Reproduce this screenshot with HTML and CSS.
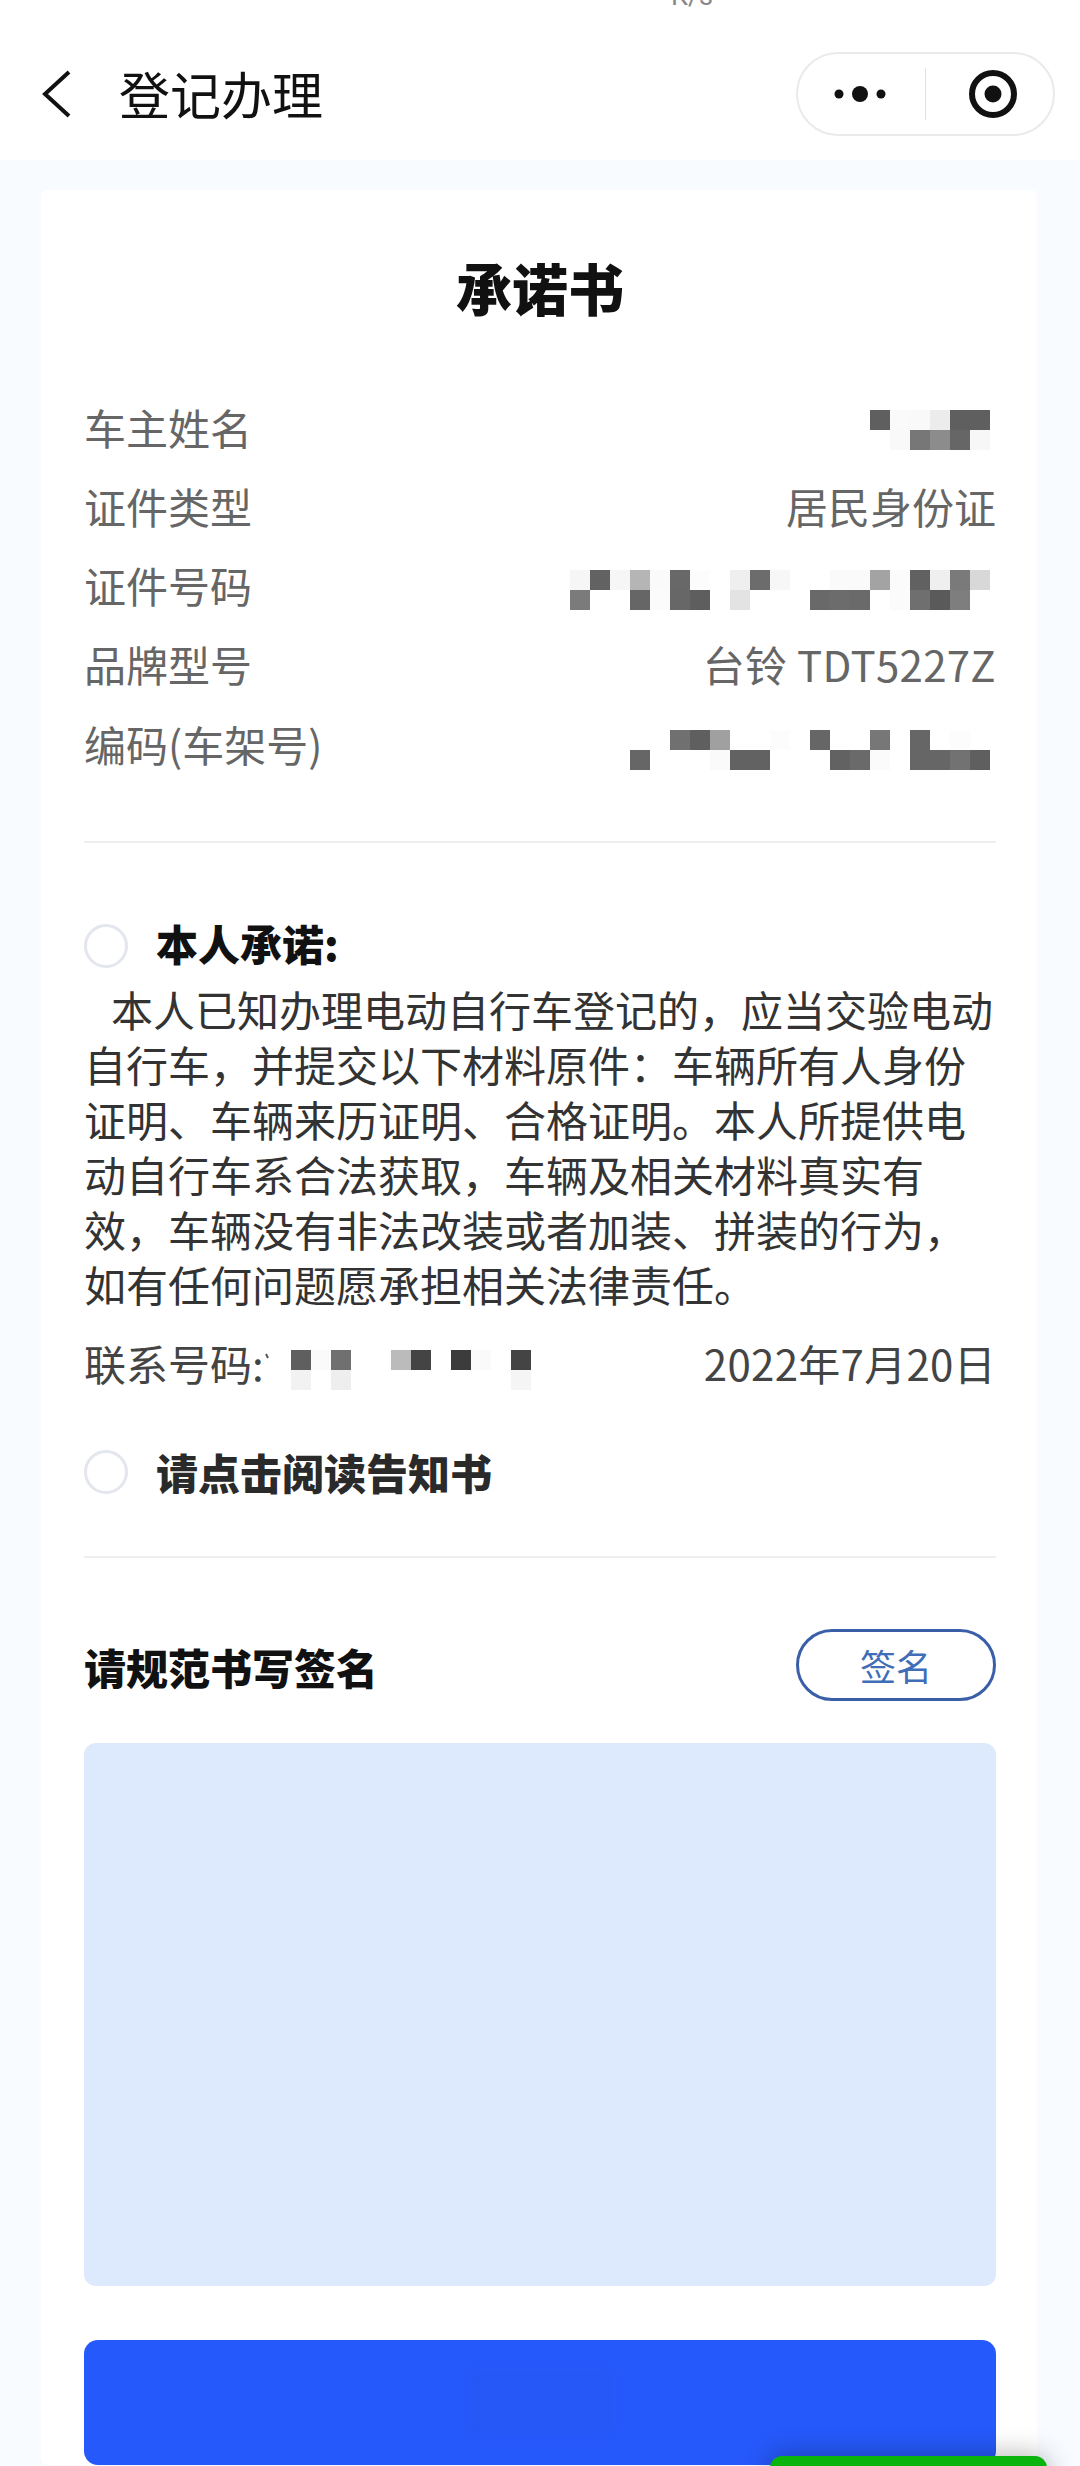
FILE: index.html
```html
<!DOCTYPE html>
<html lang="zh-CN">
<head>
<meta charset="utf-8">
<title>登记办理</title>
<link rel="stylesheet" href="styles.css">
</head>
<body>
<div class="status-speed">K/s</div>
<header class="nav">
  <div class="nav-left">
    <svg class="back" viewBox="0 0 30 50" width="30" height="50" aria-hidden="true"><path d="M28 3 L4 25 L28 47" fill="none" stroke="#111" stroke-width="4"/></svg>
    <span class="nav-title">登记办理</span>
  </div>
  <div class="capsule">
    <svg class="cap-more" viewBox="0 0 58 18" width="58" height="18" aria-hidden="true"><circle cx="8" cy="9" r="4.5" fill="#111"/><circle cx="29" cy="9" r="8" fill="#111"/><circle cx="50" cy="9" r="4.5" fill="#111"/></svg>
    <span class="cap-line"></span>
    <svg class="cap-rec" viewBox="0 0 50 50" width="50" height="50" aria-hidden="true"><circle cx="25" cy="25" r="21" fill="none" stroke="#111" stroke-width="6"/><circle cx="25" cy="25" r="8.5" fill="#111"/></svg>
  </div>
</header>
<main class="card">
  <h1 class="doc-title">承诺书</h1>
  <section class="info">
    <div class="row">
      <span>车主姓名</span>
      <svg class="mosaic mosaic-name" width="120" height="40" viewBox="0 0 120 40" aria-hidden="true">
        <rect x="0" width="20" height="20" fill="#5f5f5f"/><rect x="20" width="20" height="20" fill="#fafafa"/><rect x="40" width="20" height="20" fill="#f9f9f9"/><rect x="60" width="20" height="20" fill="#ececec"/><rect x="80" width="20" height="20" fill="#5f5f5f"/><rect x="100" width="20" height="20" fill="#5f5f5f"/>
        <rect x="20" y="20" width="20" height="20" fill="#f9f9f9"/><rect x="40" y="20" width="20" height="20" fill="#777"/><rect x="60" y="20" width="20" height="20" fill="#8c8c8c"/><rect x="80" y="20" width="20" height="20" fill="#666"/><rect x="100" y="20" width="20" height="20" fill="#f7f7f7"/>
      </svg>
    </div>
    <div class="row"><span>证件类型</span><span>居民身份证</span></div>
    <div class="row">
      <span>证件号码</span>
      <svg class="mosaic mosaic-id" width="420" height="40" viewBox="0 0 420 40" aria-hidden="true">
        <rect x="0" width="20" height="20" fill="#f6f6f6"/><rect x="20" width="20" height="20" fill="#626262"/><rect x="40" width="20" height="20" fill="#f6f6f6"/><rect x="60" width="20" height="20" fill="#b5b5b5"/><rect x="80" width="20" height="20" fill="#fafafa"/><rect x="100" width="20" height="20" fill="#686868"/><rect x="120" width="20" height="20" fill="#fcfcfc"/><rect x="160" width="20" height="20" fill="#efefef"/><rect x="180" width="20" height="20" fill="#6c6c6c"/><rect x="200" width="20" height="20" fill="#f7f7f7"/><rect x="260" width="20" height="20" fill="#fafafa"/><rect x="280" width="20" height="20" fill="#fafafa"/><rect x="300" width="20" height="20" fill="#a3a3a3"/><rect x="320" width="20" height="20" fill="#fbfbfb"/><rect x="340" width="20" height="20" fill="#616161"/><rect x="360" width="20" height="20" fill="#efefef"/><rect x="380" width="20" height="20" fill="#7a7a7a"/><rect x="400" width="20" height="20" fill="#d8d8d8"/>
        <rect x="0" y="20" width="20" height="20" fill="#7b7b7b"/><rect x="60" y="20" width="20" height="20" fill="#666"/><rect x="80" y="20" width="20" height="20" fill="#fbfbfb"/><rect x="100" y="20" width="20" height="20" fill="#676767"/><rect x="120" y="20" width="20" height="20" fill="#5e5e5e"/><rect x="160" y="20" width="20" height="20" fill="#e3e3e3"/><rect x="240" y="20" width="20" height="20" fill="#696969"/><rect x="260" y="20" width="20" height="20" fill="#6c6c6c"/><rect x="280" y="20" width="20" height="20" fill="#6a6a6a"/><rect x="320" y="20" width="20" height="20" fill="#fbfbfb"/><rect x="340" y="20" width="20" height="20" fill="#6f6f6f"/><rect x="360" y="20" width="20" height="20" fill="#5a5a5a"/><rect x="380" y="20" width="20" height="20" fill="#7e7e7e"/>
      </svg>
    </div>
    <div class="row"><span>品牌型号</span><span class="model">台铃 TDT5227Z</span></div>
    <div class="row">
      <span>编码(车架号)</span>
      <svg class="mosaic mosaic-vin" width="420" height="40" viewBox="0 0 420 40" aria-hidden="true">
        <rect x="100" width="20" height="20" fill="#707070"/><rect x="120" width="20" height="20" fill="#5f5f5f"/><rect x="140" width="20" height="20" fill="#a0a0a0"/><rect x="200" width="20" height="20" fill="#fcfcfc"/><rect x="240" width="20" height="20" fill="#666"/><rect x="300" width="20" height="20" fill="#777"/><rect x="340" width="20" height="20" fill="#666"/><rect x="380" width="20" height="20" fill="#fcfcfc"/>
        <rect x="60" y="20" width="20" height="20" fill="#666"/><rect x="140" y="20" width="20" height="20" fill="#fafafa"/><rect x="160" y="20" width="40" height="20" fill="#626262"/><rect x="260" y="20" width="20" height="20" fill="#626262"/><rect x="280" y="20" width="20" height="20" fill="#6a6a6a"/><rect x="300" y="20" width="20" height="20" fill="#fbfbfb"/><rect x="340" y="20" width="40" height="20" fill="#666"/><rect x="380" y="20" width="20" height="20" fill="#727272"/><rect x="400" y="20" width="20" height="20" fill="#5f5f5f"/>
      </svg>
    </div>
  </section>
  <hr class="rule rule-first">
  <section class="promise">
    <div class="check-row check-first"><span class="radio"></span><strong class="check-text check-black">本人承诺:</strong></div>
    <p class="promise-text">本人已知办理电动自行车登记的，应当交验电动自行车，并提交以下材料原件：车辆所有人身份证明、车辆来历证明、合格证明。本人所提供电动自行车系合法获取，车辆及相关材料真实有效，车辆没有非法改装或者加装、拼装的行为，如有任何问题愿承担相关法律责任。</p>
    <div class="contact">
      <div class="contact-left">
        <span>联系号码:</span>
        <svg class="mosaic-phone" width="266" height="40" viewBox="0 0 266 40" aria-hidden="true">
          <path d="M3 8 L1 4" stroke="#555" stroke-width="2"/>
          <rect x="26" width="20" height="20" fill="#5f5f5f"/><rect x="46" width="20" height="20" fill="#fafafa"/><rect x="66" width="20" height="20" fill="#707070"/><rect x="126" width="20" height="20" fill="#bbb"/><rect x="146" width="20" height="20" fill="#444"/><rect x="186" width="20" height="20" fill="#3c3c3c"/><rect x="206" width="20" height="20" fill="#fafafa"/><rect x="246" width="20" height="20" fill="#444"/>
          <rect x="26" y="20" width="20" height="20" fill="#f2f2f2"/><rect x="66" y="20" width="20" height="20" fill="#eee"/><rect x="246" y="20" width="20" height="20" fill="#f5f5f5"/>
        </svg>
      </div>
      <span class="date">2022年7月20日</span>
    </div>
    <div class="check-row check-second"><span class="radio"></span><strong class="check-text">请点击阅读告知书</strong></div>
  </section>
  <hr class="rule">
  <section class="sign">
    <div class="sign-head">
      <h2 class="sign-title">请规范书写签名</h2>
      <button class="sign-btn" type="button">签名</button>
    </div>
    <div class="sign-pad"></div>
    <div class="submit"><span class="submit-smudge"></span></div>
  </section>
</main>
<div class="float-btn"></div>
</body>
</html>
```
FILE: styles.css
```css
* { box-sizing: border-box; }
html, body {
  margin: 0;
  height: 2466px;
  overflow: hidden;
}
body {
  position: relative;
  background: #f8fbff;
  font-family: "Noto Sans CJK SC", "Noto Sans", sans-serif;
  color: #333;
}
.status-speed {
  position: absolute;
  left: 671px;
  top: -19px;
  font-size: 27px;
  line-height: 30px;
  color: #888;
  font-family: "Roboto", sans-serif;
}
.nav {
  height: 160px;
  background: #fff;
  padding: 52px 25px 24px 41px;
  display: flex;
  justify-content: space-between;
  align-items: center;
}
.nav-left {
  display: flex;
  align-items: center;
  gap: 48px;
}
.back { display: block; }
.nav-title {
  font-size: 51px;
  line-height: 60px;
  color: #111;
  margin-top: -3px;
}
.capsule {
  width: 259px;
  height: 84px;
  border: 2px solid #eaeaea;
  border-radius: 42px;
  background: #fff;
  display: flex;
  align-items: center;
}
.cap-more { margin-left: 33px; flex: none; }
.cap-line {
  width: 1px;
  height: 52px;
  background: #e2e2e2;
  margin-left: 36px;
  flex: none;
}
.cap-rec { margin-left: 42px; flex: none; }
.card {
  margin: 30px 43px 0 41px;
  background: #fff;
  padding: 69px 41px 0 43px;
  border-radius: 6px;
}
.doc-title {
  margin: 0 0 72px;
  text-align: center;
  font-size: 56px;
  line-height: 56px;
  font-weight: 900;
  color: #111;
}
.info { color: #666; }
.row {
  height: 79.25px;
  display: flex;
  justify-content: space-between;
  align-items: center;
  font-size: 42px;
  line-height: 50px;
}
.model { letter-spacing: 0.3px; }
.mosaic { display: block; margin-right: 6px; flex: none; }
.mosaic-name { margin-top: 7px; }
.mosaic-id { margin-top: 10px; }
.mosaic-vin { margin-top: 13px; }
.rule {
  margin: 0;
  border: 0;
  height: 2px;
  background: #eeeeee;
}
.rule-first { margin-top: 58px; }
.check-row {
  display: flex;
  align-items: center;
  gap: 28px;
}
.check-first { height: 44px; margin-top: 81px; }
.check-second { height: 44px; margin-top: 62px; margin-bottom: 62px; }
.radio {
  width: 44px;
  height: 44px;
  border: 3px solid #e3e6ed;
  border-radius: 50%;
  background: #fff;
  flex: none;
}
.check-text {
  font-size: 42px;
  line-height: 44px;
  font-weight: 900;
  color: #2a2a2a;
}
.check-black { color: #111; margin-top: -6px; }
.promise-text {
  margin: 13px 0 0;
  font-size: 42px;
  line-height: 55px;
  text-indent: 27px;
  color: #333;
}
.contact {
  margin-top: 26.75px;
  height: 50px;
  display: flex;
  justify-content: space-between;
  align-items: center;
  font-size: 42px;
  line-height: 50px;
  color: #444;
}
.contact-left {
  display: flex;
  align-items: center;
}
.date { letter-spacing: 0.3px; }
.mosaic-phone { display: block; flex: none; margin-left: 1px; margin-top: 14px; }
.sign-head {
  margin-top: 71px;
  display: flex;
  justify-content: space-between;
  align-items: center;
}
.sign-title {
  margin: 4px 0 0;
  font-size: 42px;
  line-height: 50px;
  font-weight: 900;
  color: #111;
}
.sign-btn {
  width: 200px;
  height: 72px;
  border: 3px solid #3a5fa8;
  border-radius: 36px;
  background: #fff;
  color: #3f6db8;
  font: inherit;
  font-size: 36px;
  line-height: 50px;
  padding: 0;
}
.sign-pad {
  margin-top: 42px;
  height: 543px;
  background: #dde9fc;
  border-radius: 12px;
}
.submit {
  margin-top: 54px;
  height: 125px;
  background: #2659fb;
  border-radius: 14px;
  display: flex;
  align-items: center;
  justify-content: center;
}
.submit-smudge {
  width: 145px;
  height: 65px;
  background: #2558f6;
  border-radius: 6px;
  filter: blur(3px);
}
.float-btn {
  position: absolute;
  left: 770px;
  top: 2456px;
  width: 277px;
  height: 40px;
  background: #0ab40c;
  border-radius: 12px;
  box-shadow: 0 0 28px rgba(0, 0, 0, 0.32);
}
```
